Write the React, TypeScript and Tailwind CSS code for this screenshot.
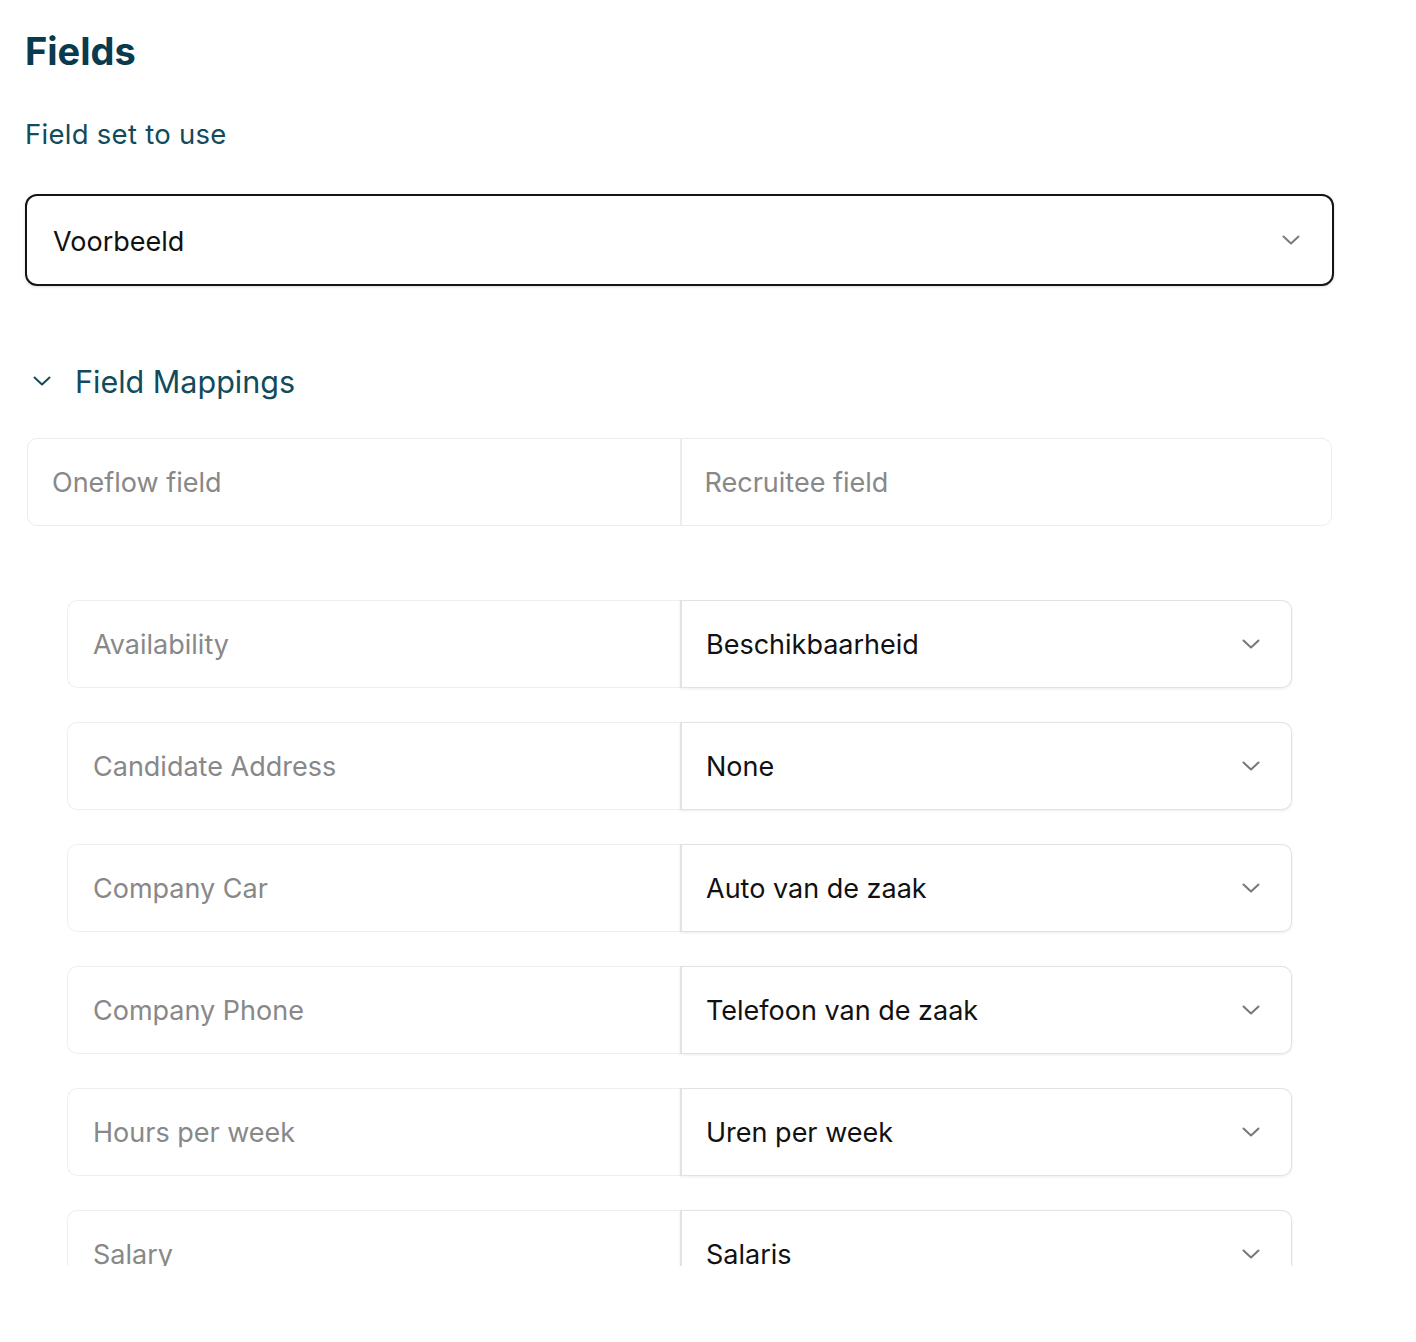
import React from "react";

const mappings = [
  { oneflow: "Availability", recruitee: "Beschikbaarheid" },
  { oneflow: "Candidate Address", recruitee: "None" },
  { oneflow: "Company Car", recruitee: "Auto van de zaak" },
  { oneflow: "Company Phone", recruitee: "Telefoon van de zaak" },
  { oneflow: "Hours per week", recruitee: "Uren per week" },
  { oneflow: "Salary", recruitee: "Salaris" },
];

const Chevron = ({ className }: { className?: string }) => (
  <svg width="18" height="10" viewBox="0 0 18 10" fill="none" className={className}>
    <path d="M1.5 1.5l7.5 7 7.5-7" stroke="currentColor" strokeWidth="2" strokeLinecap="round" strokeLinejoin="round" />
  </svg>
);

const App = () => {
  return (
    <div className="h-[1266px] overflow-hidden bg-white px-[25px] pt-[32px] font-['Inter',sans-serif]">
      <div className="w-[1309px]">
        <h1 className="text-[38px] font-bold leading-none text-[#0a3a4d]">Fields</h1>

        <p className="mt-[51px] text-[27.5px] leading-none tracking-[0.01em] text-[#124b5c]">Field set to use</p>

        {/* Field set select */}
        <div className="mt-[45px] flex h-[92px] items-center justify-between rounded-[12px] border-2 border-[#141414] pl-[26px] pr-[32px] shadow-[0_1px_3px_rgba(0,0,0,0.15)]">
          <span className="pt-[5px] text-[27px] text-[#111]">Voorbeeld</span>
          <Chevron className="text-[#7a7a7a]" />
        </div>

        {/* Field Mappings */}
        <div className="mt-[80px] flex items-center">
          <Chevron className="ml-[8px] text-[#124b5c]" />
          <span className="ml-[24px] pt-[1px] text-[30.5px] leading-none text-[#124b5c]">Field Mappings</span>
        </div>

        <div className="mx-[2px] mt-[41px] grid h-[88px] grid-cols-2 rounded-[10px] border border-[#ececec]">
          <div className="flex items-center pl-[24px] pt-[3px] text-[27px] text-[#888]">Oneflow field</div>
          <div className="flex items-center border-l-2 border-[#ececec] pl-[23px] pt-[3px] text-[27px] text-[#888]">
            Recruitee field
          </div>
        </div>

        <div className="mx-[42px] mt-[74px] flex flex-col gap-[34px]">
          {mappings.map((m) => (
            <div key={m.oneflow} className="flex h-[88px]">
              <div className="flex flex-1 items-center rounded-l-[10px] border border-r-0 border-[#efefef] pl-[25px] pt-[3px] text-[27px] text-[#888]">
                {m.oneflow}
              </div>
              <div className="flex w-[612px] items-center justify-between rounded-r-[10px] border border-l-2 border-[#e2e2e2] pl-[24px] pr-[31px] shadow-[0_1px_3px_rgba(0,0,0,0.08)]">
                <span className="pt-[3px] text-[27px] text-[#111]">{m.recruitee}</span>
                <Chevron className="text-[#777]" />
              </div>
            </div>
          ))}
        </div>
      </div>
    </div>
  );
};

export default App;
